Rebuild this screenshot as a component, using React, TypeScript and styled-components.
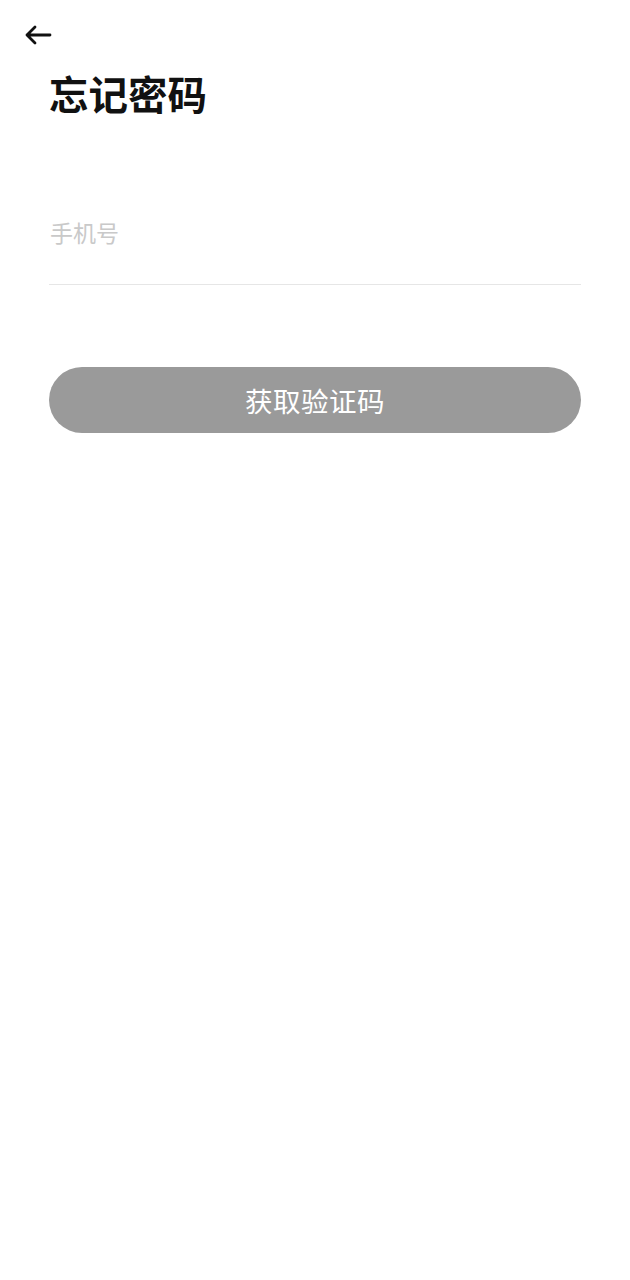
import React from "react";
import styled, { createGlobalStyle } from "styled-components";

const Global = createGlobalStyle`
  html, body { margin: 0; padding: 0; background: #ffffff; }
  body { font-family: "Noto Sans CJK SC", "Noto Sans", sans-serif; }
  * { box-sizing: border-box; }
`;

const Page = styled.div`
  width: 630px;
  min-height: 1280px;
  background: #ffffff;
  display: flex;
  flex-direction: column;
`;

const TopBar = styled.div`
  height: 70px;
  display: flex;
  align-items: center;
  padding-left: 24px;
`;

const BackButton = styled.button`
  border: none;
  background: none;
  padding: 0;
  margin-top: -1px;
  width: 28px;
  height: 28px;
  display: flex;
  align-items: center;
  justify-content: center;
  cursor: pointer;
`;

const Content = styled.div`
  padding: 0 49px;
  display: flex;
  flex-direction: column;
`;

const Title = styled.h1`
  margin: 0;
  font-size: 39.5px;
  line-height: 50px;
  font-weight: 700;
  color: #111111;
  margin-top: -2px;
`;

const Field = styled.div`
  margin-top: 98px;
  height: 69px;
  border-bottom: 1.5px solid #e6e6e6;
  display: flex;
  align-items: flex-start;
`;

const Input = styled.input`
  border: none;
  outline: none;
  width: 100%;
  font-family: "Noto Sans CJK SC", sans-serif;
  font-size: 23px;
  line-height: 32px;
  padding: 0 0 0 1px;
  color: #222;
  background: transparent;
  &::placeholder { color: #c9c9c9; }
`;

const SubmitButton = styled.button`
  margin-top: 82px;
  height: 66px;
  width: 100%;
  border: none;
  border-radius: 33px;
  background: #9a9a9a;
  color: #ffffff;
  font-family: "Noto Sans CJK SC", sans-serif;
  font-size: 27.5px;
  letter-spacing: 0.5px;
  display: flex;
  align-items: center;
  justify-content: center;
  padding: 0;
`;

const BackArrow = () => (
  <svg width="28" height="20" viewBox="0 0 28 20" fill="none">
    <path d="M26 10H3M11 2L3 10L11 18" stroke="#111" strokeWidth="2.8" strokeLinecap="round" strokeLinejoin="round" />
  </svg>
);

export default function App() {
  return (
    <>
      <Global />
      <Page>
        <TopBar>
          <BackButton aria-label="返回">
            <BackArrow />
          </BackButton>
        </TopBar>
        <Content>
          <Title>忘记密码</Title>
          <Field>
            <Input placeholder="手机号" />
          </Field>
          <SubmitButton>获取验证码</SubmitButton>
        </Content>
      </Page>
    </>
  );
}
